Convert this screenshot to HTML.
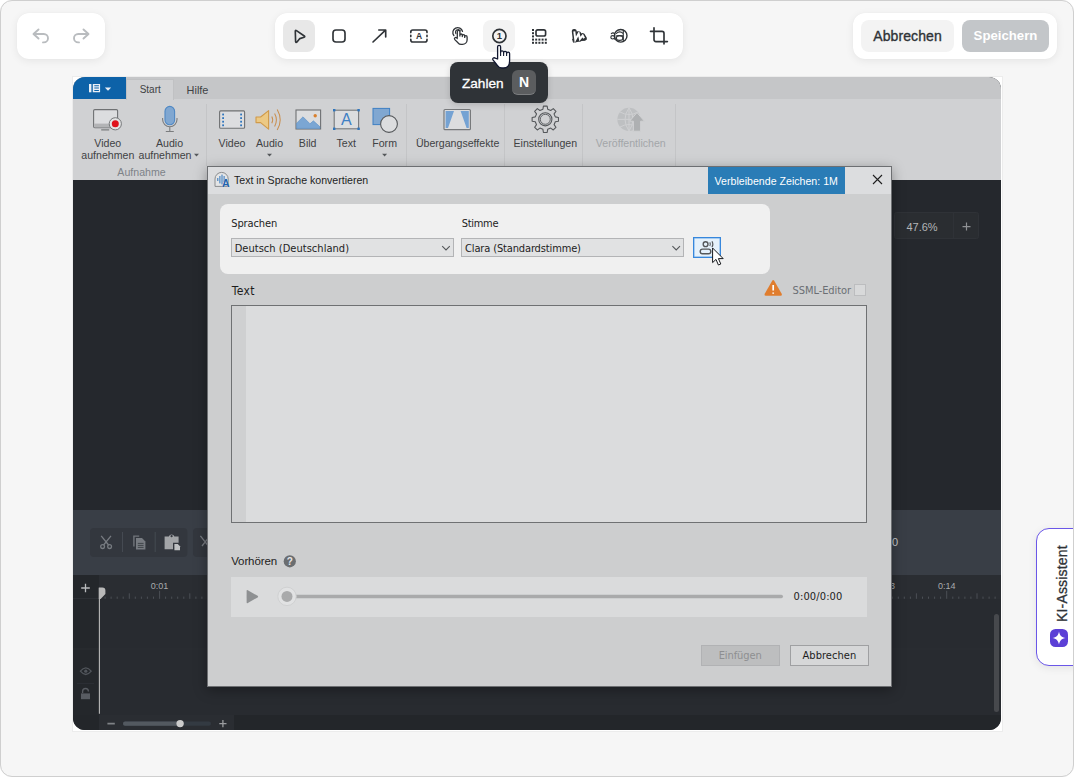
<!DOCTYPE html>
<html lang="de">
<head>
<meta charset="utf-8">
<title>Screenshot-Editor</title>
<style>
*{box-sizing:border-box;margin:0;padding:0}
html,body{width:1074px;height:777px;overflow:hidden;background:#fff;font-family:"Liberation Sans",sans-serif;}
.abs{position:absolute}
#page{position:absolute;left:0;top:0;width:1074px;height:777px;background:#f6f6f6;border-radius:12px;overflow:hidden}
#edge{position:absolute;left:0;top:0;width:1074px;height:777px;border:1px solid #cfcfcf;border-radius:12px;pointer-events:none}
.ic{position:absolute;overflow:visible;fill:none;stroke:#2f3337;stroke-width:1.65;stroke-linecap:round;stroke-linejoin:round}
.card{position:absolute;background:#fff;border-radius:12px;box-shadow:0 2px 8px rgba(0,0,0,.07),0 0 1px rgba(0,0,0,.05)}
.tbtn{position:absolute;top:7px;width:32px;height:32px;border-radius:8px}
.tbtn svg{position:absolute;left:6px;top:6px;width:20px;height:20px;fill:none;stroke:#222;stroke-width:1.6;stroke-linecap:round;stroke-linejoin:round}
/* app screenshot */
#frame{position:absolute;left:72px;top:76px;width:931px;height:656px;background:#fff;border:1px solid #ececec}
#shot{position:absolute;left:0;top:0;width:928px;height:653px;border-radius:12px;overflow:hidden;background:#25282d;font-family:"Liberation Sans",sans-serif}
.rl{position:absolute;font-size:10.6px;line-height:12px;color:#404244;text-align:center;white-space:nowrap;transform:translateX(-50%)}
.sep{position:absolute;width:1px;height:62px;background:#c4c5c7}
.dl{position:absolute;font-family:"DejaVu Sans Condensed","Liberation Sans",sans-serif;font-size:11px;line-height:12px;color:#1d1d1d;white-space:nowrap}
</style>
</head>
<body>
<div id="page">

<!-- undo / redo -->
<div class="card" style="left:17px;top:13px;width:88px;height:46px" id="undo">
<svg class="ic" style="left:0;top:0;stroke:#b9bcbf;stroke-width:1.9" width="88" height="46" viewBox="17 13 88 46">
<path d="M38.5 29.5 L33.5 34 L38.5 38.5"/><path d="M34 34 H43.8 a4.2 4.2 0 0 1 0 8.4 H43"/>
<path d="M83.5 29.5 L88.5 34 L83.5 38.5"/><path d="M88 34 H78.2 a4.2 4.2 0 0 0 0 8.4 H79"/>
</svg>
</div>

<!-- tools -->
<div class="card" style="left:275px;top:13px;width:408px;height:46px" id="tools">
<div class="abs" style="left:8px;top:7px;width:32px;height:32px;border-radius:8px;background:#e8e8e8"></div>
<div class="abs" style="left:208px;top:7px;width:32px;height:32px;border-radius:8px;background:#f3f3f3"></div>
<svg class="ic" style="left:0;top:0" width="408" height="46" viewBox="275 13 408 46">
<!-- pointer -->
<path d="M295.3 31.2 Q295.3 29.9 296.5 30.6 L304.3 36 Q305.3 36.8 304.1 37.2 L299.8 38.6 L297 42 Q295.9 43 295.6 41.6 Z"/>
<!-- square -->
<rect x="333" y="30" width="12" height="12" rx="3"/>
<!-- arrow -->
<path d="M373 42 L385.5 30.2 M378.8 30 H385.7 V37"/>
<!-- text box -->
<path d="M410.8 32.6 V32 a2 2 0 0 1 2-2 H425 a2 2 0 0 1 2 2 V32.6 M410.8 39.4 V40 a2 2 0 0 0 2 2 H425 a2 2 0 0 0 2-2 V39.4 M410.8 35.4 V36.6 M427 35.4 V36.6"/>
<!-- number circle -->
<circle cx="499.4" cy="36" r="6.6"/>
<!-- blur -->
<rect x="536" y="29.8" width="9.6" height="6.2" rx="1.8"/>
<!-- crop -->
<path d="M654 27.8 V39.6 a2 2 0 0 0 2 2 H667.4 M650.5 31.4 H662 a2 2 0 0 1 2 2 V44"/>
<!-- highlighter -->
<path d="M573 39 L585.6 36.6 L586.2 39.6 L573.8 42.2 Z" fill="#2f3337" stroke-width="1"/>
<path d="M574.3 31.4 L575.3 39.8 L578.7 33.6 L579.9 39 L582.7 35.6 L584.1 38.2" stroke-width="5"/>
<path d="M574.3 31.4 L575.3 39.8 L578.7 33.6 L579.9 39 L582.7 35.6 L584.1 38.2" stroke="#fff" stroke-width="2" stroke-linejoin="miter" stroke-linecap="butt"/>
<!-- zoom aa -->
<circle cx="620.7" cy="35.8" r="6.3" stroke-width="1.4"/>
<g stroke-width="1.1"><path d="M623.3 30.2 V41.4 M616.4 33.4 q3.4 -3 6.8 .2 M616.6 35.8 H623"/><ellipse cx="619.6" cy="38" rx="3.3" ry="2.4"/>
<path d="M614.7 33.8 V39.2 M611.3 33.6 q1.8 -1.6 3.4 .2"/><ellipse cx="612.7" cy="37.3" rx="1.9" ry="1.7"/></g>
<!-- hand click -->
<path d="M457.3 37.5 V31.6 a1.3 1.3 0 0 1 2.6 0 V36 M459.9 35.2 a1.2 1.2 0 0 1 2.4 0 V36.6 M462.3 35.9 a1.2 1.2 0 0 1 2.4 0 V37.4 M464.7 36.9 a1.2 1.2 0 0 1 2.4 0 V40 a4.6 4.6 0 0 1 -4.6 4.4 H461.2 a4 4 0 0 1 -3.2 -1.6 L454.8 39.6 a1.3 1.3 0 0 1 2 -1.7 L457.3 38.6" stroke-width="1.3"/>
<path d="M453.9 35.6 a4.9 4.9 0 1 1 8.6 -4.2" stroke-width="1.3"/>
<path d="M455.9 33.6 a2.6 2.6 0 0 1 4.4 -2.8" stroke-width="1.1"/>
<g fill="#2f3337" stroke="none">
<rect x="532" y="29" width="2" height="2"/><rect x="532" y="32.2" width="2" height="2"/><rect x="532" y="35.4" width="2" height="2"/>
<rect x="532" y="38.6" width="2" height="2"/><rect x="535.2" y="38.6" width="2" height="2"/><rect x="538.4" y="38.6" width="2" height="2"/><rect x="541.6" y="38.6" width="2" height="2"/><rect x="544.8" y="38.6" width="2" height="2"/>
<rect x="532" y="41.8" width="2" height="2"/><rect x="535.2" y="41.8" width="2" height="2"/><rect x="538.4" y="41.8" width="2" height="2"/><rect x="541.6" y="41.8" width="2" height="2"/><rect x="544.8" y="41.8" width="2" height="2"/>
</g>
<g fill="#2f3337" stroke="none" font-family="Liberation Sans, sans-serif" font-weight="bold">
<text x="419" y="39.2" font-size="8.5" text-anchor="middle">A</text>
<text x="499.5" y="39.4" font-size="9.5" text-anchor="middle">1</text>
</g>
</svg>
</div>

<!-- actions -->
<div class="card" style="left:853px;top:13px;width:204px;height:46px" id="actions">
<div class="abs" style="left:8px;top:7px;width:93px;height:32px;border-radius:8px;background:#f3f3f3;color:#2f3337;font-size:14px;line-height:32px;text-align:center;letter-spacing:.1px;-webkit-text-stroke:.35px #2f3337">Abbrechen</div>
<div class="abs" style="left:109px;top:7px;width:87px;height:32px;border-radius:8px;background:#c3c6c9;color:#fff;font-size:13.2px;font-weight:bold;line-height:32px;text-align:center">Speichern</div>
</div>

<!-- framed app screenshot -->
<div id="frame"><div id="shot">
<div id="pc" style="position:absolute;left:-73px;top:-77px;width:1074px;height:777px">
<!-- ribbon -->
<div class="abs" style="left:73px;top:77px;width:928px;height:22px;background:#c5c6c8"></div>
<div class="abs" style="left:73px;top:99px;width:928px;height:81px;background:#d0d1d3"></div>
<div class="abs" style="left:73px;top:77px;width:53px;height:22px;background:#0d62a8"></div>
<div class="abs" style="left:126px;top:79px;width:48px;height:21px;background:#d0d1d3;border:1px solid #c0c1c3;border-bottom:0"></div>
<div class="rl" style="left:150.2px;top:84px;font-size:10px">Start</div>
<div class="rl" style="left:197.5px;top:84px;font-size:10.9px">Hilfe</div>
<div class="rl" style="left:107.8px;top:137px">Video<br>aufnehmen</div>
<div class="rl" style="left:169.5px;top:137px">Audio</div>
<div class="rl" style="left:165px;top:149px">aufnehmen</div>
<div class="rl" style="left:141.5px;top:166px;color:#7d8288">Aufnahme</div>
<div class="rl" style="left:232px;top:137px">Video</div>
<div class="rl" style="left:269.5px;top:137px">Audio</div>
<div class="rl" style="left:307.7px;top:137px">Bild</div>
<div class="rl" style="left:346.2px;top:137px">Text</div>
<div class="rl" style="left:384.6px;top:137px">Form</div>
<div class="rl" style="left:457.6px;top:137px">Übergangseffekte</div>
<div class="rl" style="left:545.3px;top:137px">Einstellungen</div>
<div class="rl" style="left:630.8px;top:137px;color:#a3a6a9">Veröffentlichen</div>
<div class="sep" style="left:206px;top:104px"></div>
<div class="sep" style="left:406px;top:104px"></div>
<div class="sep" style="left:504px;top:104px"></div>
<div class="sep" style="left:582px;top:104px"></div>
<div class="sep" style="left:675px;top:104px"></div>
<svg class="abs" id="ribsvg" style="left:73px;top:77px" width="928" height="110" viewBox="73 77 928 110">
<!-- menu tab icon -->
<g fill="#e9eef5"><rect x="89" y="84" width="2.4" height="8.3"/><path d="M92.8 84 h7.3 v8.3 h-7.3 z M94.3 85.3 v1 h4.6 v-1 z M94.3 87.6 v1 h4.6 v-1 z M94.3 89.9 v1 h4.6 v-1 z" fill-rule="evenodd"/><path d="M104.8 87.4 h6.4 l-3.2 3.3 z"/></g>
<!-- video record -->
<rect x="93.6" y="109.6" width="24" height="18.2" rx="1.2" fill="#dcdddf" stroke="#6f7173" stroke-width="1.1"/>
<rect x="94.2" y="123.6" width="22.8" height="3.7" fill="#b3b4b6"/>
<path d="M101.2 129.8 h8" stroke="#7a7c7e" stroke-width="1.2"/>
<circle cx="115.3" cy="123.8" r="6.1" fill="#e3e4e5" stroke="#77797b" stroke-width="1"/>
<circle cx="115.3" cy="123.8" r="3.5" fill="#e0131d"/>
<!-- mic -->
<rect x="165" y="106.4" width="9.6" height="18.4" rx="4.8" fill="#80a7d1" stroke="#4f88c4" stroke-width="1.1"/>
<path d="M162.6 118 v1.6 a7.2 7.2 0 0 0 14.4 0 v-1.6 M169.8 126.8 v4.6 M165.8 131.5 h8" fill="none" stroke="#7a7c7e" stroke-width="1.1"/>
<path d="M194 153.8 h5 l-2.5 2.6 z" fill="#55585b"/>
<!-- video -->
<rect x="219.6" y="110.9" width="25" height="17.4" rx="1" fill="#dcdddf" stroke="#6f7173" stroke-width="1.1"/>
<g fill="#2f75bd"><rect x="222.2" y="113.6" width="1.8" height="1.8"/><rect x="222.2" y="117.2" width="1.8" height="1.8"/><rect x="222.2" y="120.8" width="1.8" height="1.8"/><rect x="222.2" y="124.4" width="1.8" height="1.8"/>
<rect x="240.2" y="113.6" width="1.8" height="1.8"/><rect x="240.2" y="117.2" width="1.8" height="1.8"/><rect x="240.2" y="120.8" width="1.8" height="1.8"/><rect x="240.2" y="124.4" width="1.8" height="1.8"/></g>
<!-- audio -->
<path d="M256 117 h4.6 l8 -6.4 v18.6 l-8 -6.6 h-4.6 z" fill="#ecc984" stroke="#d09a4a" stroke-width="1.1" stroke-linejoin="round"/>
<path d="M271.8 116.6 q1.8 3.2 0 6.6 M274.6 113.4 q3.6 6.4 0 13 M277.2 109.4 q6 10.4 0 20.6" fill="none" stroke="#c98f4f" stroke-width="1.05"/>
<path d="M267 153.8 h5 l-2.5 2.6 z" fill="#55585b"/>
<!-- bild -->
<rect x="296" y="110" width="24.6" height="19" fill="#dcdddf" stroke="#6f7173" stroke-width="1.1"/>
<path d="M296.6 128.4 v-5.2 l6.4 -6.4 l7 7 l3.4 -3 l6.6 6 v1.6 z" fill="#7ba6d3" stroke="#4f88c4" stroke-width=".5"/>
<circle cx="315.2" cy="115.8" r="1.7" fill="#d9802e"/>
<!-- text -->
<rect x="334.2" y="110.2" width="24.4" height="18.6" fill="#dcdddf" stroke="#77797b" stroke-width="1.1"/>
<g fill="#2f75bd"><rect x="333" y="109" width="2.4" height="2.4"/><rect x="357.4" y="109" width="2.4" height="2.4"/><rect x="333" y="127.6" width="2.4" height="2.4"/><rect x="357.4" y="127.6" width="2.4" height="2.4"/></g>
<text x="346.4" y="125.3" font-family="Liberation Sans, sans-serif" font-size="16" fill="#3f80c4" text-anchor="middle">A</text>
<!-- form -->
<rect x="373" y="108.4" width="16.6" height="16.2" fill="#80a7d1" stroke="#3f80c4" stroke-width="1"/>
<circle cx="389" cy="124" r="8.4" fill="#dcdddf" stroke="#55585b" stroke-width="1.1"/>
<path d="M382.1 153.8 h5 l-2.5 2.6 z" fill="#55585b"/>
<!-- transitions -->
<rect x="444" y="109.5" width="26.4" height="20.2" rx="1" fill="#dcdddf" stroke="#77797b" stroke-width="1.2"/>
<path d="M445.6 111 h8.4 l-6 17 h-2.4 z M460.6 111 h8.2 v17 h-2.2 z" fill="#74a2d3"/>
<!-- gear -->
<g transform="translate(545.3 119.3)" fill="none" stroke="#55585b" stroke-width="1.1" stroke-linejoin="round">
<path d="M-2.40 -10.02 L-1.87 -13.17 L1.87 -13.17 L2.40 -10.02 L5.38 -8.78 L7.99 -10.64 L10.64 -7.99 L8.78 -5.38 L10.02 -2.40 L13.17 -1.87 L13.17 1.87 L10.02 2.40 L8.78 5.38 L10.64 7.99 L7.99 10.64 L5.38 8.78 L2.40 10.02 L1.87 13.17 L-1.87 13.17 L-2.40 10.02 L-5.38 8.78 L-7.99 10.64 L-10.64 7.99 L-8.78 5.38 L-10.02 2.40 L-13.17 1.87 L-13.17 -1.87 L-10.02 -2.40 L-8.78 -5.38 L-10.64 -7.99 L-7.99 -10.64 L-5.38 -8.78 Z"/>
<circle r="6.6"/><circle r="5" stroke-width=".9"/>
</g>
<!-- publish -->
<g opacity=".75"><circle cx="629" cy="119.4" r="11.6" fill="#b9bbbd"/>
<path d="M617.4 119.4 h23 M629 107.8 v23 M620 112 q9 5 18 0 M620 127 q9 -5 18 0 M629 107.8 q-8 11.6 0 23.2 M629 107.8 q8 11.6 0 23.2" fill="none" stroke="#cfd0d2" stroke-width="1"/>
<path d="M637 112.6 l7.4 8.6 h-3.8 v10 h-7.2 v-10 h-3.8 z" fill="#a3a5a7" stroke="#d0d1d3" stroke-width="1"/></g>
</svg>

<!-- dark editor -->
<div class="abs" style="left:73px;top:510px;width:928px;height:65px;background:#393e46"></div>
<div class="abs" style="left:73px;top:575px;width:928px;height:140px;background:#282b30"></div>
<div class="abs" style="left:73px;top:575px;width:26px;height:140px;background:#24272b"></div>
<div class="abs" style="left:73px;top:715px;width:928px;height:15px;background:#23262a"></div>
<div class="abs" style="left:99px;top:715px;width:135px;height:15px;background:#2a2d32"></div>
<svg class="abs" id="darksvg" style="left:73px;top:180px" width="928" height="550" viewBox="73 180 928 550">
<!-- zoom control -->
<rect x="894.5" y="212.5" width="84" height="26" rx="2" fill="#2a2d31" stroke="#2f3237"/>
<path d="M953.5 213 V238" stroke="#2f3237"/>
<text x="922" y="231" font-family="Liberation Sans, sans-serif" font-size="11" fill="#b4b6b8" text-anchor="middle">47.6%</text>
<path d="M962.5 226.6 h8 M966.5 222.6 v8" stroke="#8f9194" stroke-width="1.2"/>
<!-- toolbar groups -->
<rect x="90" y="528" width="97.4" height="29" rx="4" fill="#33373e"/>
<rect x="193" y="528" width="97.4" height="29" rx="4" fill="#33373e"/>
<path d="M122.5 532 V552 M155.2 532 V552" stroke="#454a52" stroke-width="1"/>
<!-- scissors -->
<g fill="none" stroke="#777b81" stroke-width="1.3"><circle cx="102.6" cy="546.6" r="1.9"/><circle cx="109.6" cy="546.6" r="1.9"/><path d="M101.2 535.8 L108.6 545 M111 535.8 L103.6 545"/></g>
<!-- copy -->
<path d="M133.2 535.4 h6 v1.4 h-4.6 v9.6 h-1.4 z" fill="#71757b"/>
<path d="M136 538 h6 l3.4 3.4 v8 h-9.4 z" fill="#777b81"/>
<path d="M137.8 543.4 h5.8 M137.8 545.4 h5.8 M137.8 547.4 h5.8" stroke="#33373e" stroke-width=".8"/>
<!-- paste -->
<path d="M164.6 536.4 h4.2 a3 3 0 0 1 5.6 0 h4.2 v6.4 h-5.6 v6.4 h-8.4 z" fill="#a3a5a8"/>
<circle cx="171.6" cy="536.2" r="1.1" fill="#33373e"/>
<path d="M174.4 544 h3.4 l2.2 2.2 v4 h-5.6 z" fill="#bfc1c3"/>
<path d="M200.4 535.8 L210 548 M210 535.8 L202 546" stroke="#777b81" stroke-width="1.3" fill="none"/>
<text x="892" y="546.2" font-family="Liberation Sans, sans-serif" font-size="11" fill="#c9cbcd">0</text>
<!-- timeline -->
<rect x="99" y="575" width="902" height="24" fill="#2a2d32"/>
<path d="M73 598.5 H99" stroke="#2d3035" stroke-width="1"/>
<path d="M73 649 H1001" stroke="#2b2e33" stroke-width="1"/>
<path d="M81.2 588 h8.6 M85.5 583.7 v8.6" stroke="#b9bbbd" stroke-width="1.3"/>
<path d="M105.1 596.6 V598.8 M111.1 596.6 V598.8 M117.2 596.6 V598.8 M123.2 596.6 V598.8 M129.3 593.3 V598.8 M135.3 596.6 V598.8 M141.4 596.6 V598.8 M147.4 596.6 V598.8 M153.5 596.6 V598.8 M159.6 590.8 V598.8 M165.6 596.6 V598.8 M171.7 596.6 V598.8 M177.7 596.6 V598.8 M183.8 596.6 V598.8 M189.8 593.3 V598.8 M195.9 596.6 V598.8 M201.9 596.6 V598.8 M208.0 596.6 V598.8 M214.0 596.6 V598.8 M220.1 590.8 V598.8 M226.2 596.6 V598.8 M232.2 596.6 V598.8 M238.3 596.6 V598.8 M244.3 596.6 V598.8 M250.4 593.3 V598.8 M256.4 596.6 V598.8 M262.5 596.6 V598.8 M268.5 596.6 V598.8 M274.6 596.6 V598.8 M280.6 590.8 V598.8 M286.7 596.6 V598.8 M292.8 596.6 V598.8 M298.8 596.6 V598.8 M304.9 596.6 V598.8 M310.9 593.3 V598.8 M317.0 596.6 V598.8 M323.0 596.6 V598.8 M329.1 596.6 V598.8 M335.1 596.6 V598.8 M341.2 590.8 V598.8 M347.3 596.6 V598.8 M353.3 596.6 V598.8 M359.4 596.6 V598.8 M365.4 596.6 V598.8 M371.5 593.3 V598.8 M377.5 596.6 V598.8 M383.6 596.6 V598.8 M389.6 596.6 V598.8 M395.7 596.6 V598.8 M401.8 590.8 V598.8 M407.8 596.6 V598.8 M413.9 596.6 V598.8 M419.9 596.6 V598.8 M426.0 596.6 V598.8 M432.0 593.3 V598.8 M438.1 596.6 V598.8 M444.1 596.6 V598.8 M450.2 596.6 V598.8 M456.2 596.6 V598.8 M462.3 590.8 V598.8 M468.4 596.6 V598.8 M474.4 596.6 V598.8 M480.5 596.6 V598.8 M486.5 596.6 V598.8 M492.6 593.3 V598.8 M498.6 596.6 V598.8 M504.7 596.6 V598.8 M510.7 596.6 V598.8 M516.8 596.6 V598.8 M522.8 590.8 V598.8 M528.9 596.6 V598.8 M535.0 596.6 V598.8 M541.0 596.6 V598.8 M547.1 596.6 V598.8 M553.1 593.3 V598.8 M559.2 596.6 V598.8 M565.2 596.6 V598.8 M571.3 596.6 V598.8 M577.3 596.6 V598.8 M583.4 590.8 V598.8 M589.5 596.6 V598.8 M595.5 596.6 V598.8 M601.6 596.6 V598.8 M607.6 596.6 V598.8 M613.7 593.3 V598.8 M619.7 596.6 V598.8 M625.8 596.6 V598.8 M631.8 596.6 V598.8 M637.9 596.6 V598.8 M643.9 590.8 V598.8 M650.0 596.6 V598.8 M656.1 596.6 V598.8 M662.1 596.6 V598.8 M668.2 596.6 V598.8 M674.2 593.3 V598.8 M680.3 596.6 V598.8 M686.3 596.6 V598.8 M692.4 596.6 V598.8 M698.4 596.6 V598.8 M704.5 590.8 V598.8 M710.6 596.6 V598.8 M716.6 596.6 V598.8 M722.7 596.6 V598.8 M728.7 596.6 V598.8 M734.8 593.3 V598.8 M740.8 596.6 V598.8 M746.9 596.6 V598.8 M752.9 596.6 V598.8 M759.0 596.6 V598.8 M765.0 590.8 V598.8 M771.1 596.6 V598.8 M777.2 596.6 V598.8 M783.2 596.6 V598.8 M789.3 596.6 V598.8 M795.3 593.3 V598.8 M801.4 596.6 V598.8 M807.4 596.6 V598.8 M813.5 596.6 V598.8 M819.5 596.6 V598.8 M825.6 590.8 V598.8 M831.7 596.6 V598.8 M837.7 596.6 V598.8 M843.8 596.6 V598.8 M849.8 596.6 V598.8 M855.9 593.3 V598.8 M861.9 596.6 V598.8 M868.0 596.6 V598.8 M874.0 596.6 V598.8 M880.1 596.6 V598.8 M886.1 590.8 V598.8 M892.2 596.6 V598.8 M898.3 596.6 V598.8 M904.3 596.6 V598.8 M910.4 596.6 V598.8 M916.4 593.3 V598.8 M922.5 596.6 V598.8 M928.5 596.6 V598.8 M934.6 596.6 V598.8 M940.6 596.6 V598.8 M946.7 590.8 V598.8 M952.8 596.6 V598.8 M958.8 596.6 V598.8 M964.9 596.6 V598.8 M970.9 596.6 V598.8 M977.0 593.3 V598.8 M983.0 596.6 V598.8 M989.1 596.6 V598.8 M995.1 596.6 V598.8" stroke="#4b4f55" stroke-width="1"/>
<g font-family="Liberation Sans, sans-serif" font-size="9" fill="#a9abad" text-anchor="middle">
<text x="159.6" y="588.8">0:01</text><text x="886.2" y="588.8">0:13</text><text x="946.7" y="588.8">0:14</text>
</g>
<path d="M98.8 587.6 h3.6 a3 3 0 0 1 3 3 v3.4 l-4.8 5 h-1.8 z" fill="#b9b9b9"/>
<path d="M99.4 588 V713.8" stroke="#b9b9b9" stroke-width="1.1"/>
<!-- eye / lock -->
<path d="M80.4 671.2 q5.4 -6.6 10.8 0 q-5.4 6.6 -10.8 0 z" fill="none" stroke="#51555b" stroke-width="1.3"/><circle cx="85.8" cy="671.2" r="1.6" fill="#51555b"/>
<path d="M77 683.6 H94" stroke="#2d3035"/>
<rect x="81" y="693.4" width="9" height="5.8" fill="#585c62"/><path d="M82.6 693 v-1.6 a2.9 2.9 0 0 1 5.8 0" fill="none" stroke="#585c62" stroke-width="1.3"/>
<!-- scrollbar -->
<rect x="994" y="614" width="5" height="98" rx="2.5" fill="#47494d"/>
<!-- zoom slider -->
<path d="M107.4 723.7 h7.4" stroke="#7f8286" stroke-width="1.8"/>
<rect x="123" y="721.6" width="88" height="4.2" rx="2.1" fill="#333a42"/>
<rect x="123" y="721.6" width="57" height="4.2" rx="2.1" fill="#535960"/>
<circle cx="180.1" cy="723.6" r="3.7" fill="#cbcbcb"/>
<path d="M219.3 723.6 h7.2 M222.9 720 v7.2" stroke="#9a9c9f" stroke-width="1.3"/>
</svg>

<!-- dialog -->
<div class="abs" id="dlg" style="left:207px;top:166px;width:685px;height:521px;background:#cdcecf;border:1px solid #6d6f72;box-shadow:0 3px 12px rgba(0,0,0,.35)"></div>
<div class="abs" style="left:208px;top:167px;width:683px;height:27px;background:#dcdddf"></div>
<div class="abs" style="left:708px;top:167px;width:137px;height:27px;background:#2a7cb6"></div>
<div class="abs" style="left:220px;top:204px;width:550px;height:70px;border-radius:8px;background:#f0f0f0"></div>
<div class="abs" style="left:231px;top:237.5px;width:223px;height:19.6px;background:#e1e2e3;border:1px solid #b3b4b6"></div>
<div class="abs" style="left:461.4px;top:237.5px;width:222.6px;height:19.6px;background:#e1e2e3;border:1px solid #b3b4b6"></div>
<div class="abs" style="left:693px;top:237.4px;width:28px;height:20.2px;background:#e5f1fb;border:1px solid #3787dc;box-shadow:inset 0 0 0 .5px #6aa8e8"></div>
<div class="abs" style="left:231px;top:305px;width:636px;height:218px;background:#dbdcdd;border:1px solid #6f7173"></div>
<div class="abs" style="left:232px;top:306px;width:14px;height:216px;background:#cfd0d1"></div>
<div class="abs" style="left:854px;top:284px;width:12px;height:12px;background:#d8d9da;border:1px solid #bcbdbf"></div>
<div class="abs" style="left:231px;top:577px;width:636px;height:40px;background:#dadbdc"></div>
<div class="abs" style="left:701px;top:645px;width:79px;height:21px;background:#bdbebf;border:1px solid #b1b2b4"></div>
<div class="abs" style="left:790px;top:645px;width:79px;height:21px;background:#d6d7d8;border:1px solid #9fa0a2"></div>
<div class="dl" style="left:234px;top:174px;font-family:'Liberation Sans',sans-serif;font-size:10.6px">Text in Sprache konvertieren</div>
<div class="dl" style="left:714.6px;top:174.6px;font-family:'Liberation Sans',sans-serif;font-size:10.6px;letter-spacing:.01px;color:#fff">Verbleibende Zeichen: 1M</div>
<div class="dl" style="left:231.3px;top:217.7px;letter-spacing:-.13px">Sprachen</div>
<div class="dl" style="left:461.7px;top:217.7px;letter-spacing:-.3px">Stimme</div>
<div class="dl" style="left:234.7px;top:242.8px;letter-spacing:.03px">Deutsch (Deutschland)</div>
<div class="dl" style="left:465px;top:242.8px;letter-spacing:-.14px">Clara (Standardstimme)</div>
<div class="dl" style="left:231.8px;top:284.6px;font-size:12px;letter-spacing:.32px">Text</div>
<div class="dl" style="left:792.6px;top:284.6px;letter-spacing:-.08px;color:#6b6e74">SSML-Editor</div>
<div class="dl" style="left:231.2px;top:554.8px;font-family:'Liberation Sans',sans-serif;font-size:11.5px;letter-spacing:-.11px">Vorhören</div>
<div class="dl" style="left:793.5px;top:590.6px;letter-spacing:.13px">0:00/0:00</div>
<div class="dl" style="left:718.7px;top:650px;letter-spacing:-.09px;color:#8e8f91">Einfügen</div>
<div class="dl" style="left:802.5px;top:650px;letter-spacing:.04px">Abbrechen</div>
<svg class="abs" id="dlgsvg" style="left:207px;top:166px" width="684" height="521" viewBox="207 166 684 521">
<!-- title icon -->
<path d="M215 186.4 V179 a6.6 6.6 0 0 1 13.2 0 V186.4 z" fill="#e4e5e6" stroke="#8a8c8e" stroke-width="1"/>
<path d="M217.8 178 v3 M219.9 176 v7.4 M222 174.6 v9.8 M224.1 176 v6" stroke="#2f75bd" stroke-width="1"/>
<text x="225.8" y="187.2" font-family="Liberation Sans, sans-serif" font-weight="bold" font-size="10.5" fill="#1f63b0" stroke="#dcdddf" stroke-width=".5" paint-order="stroke" text-anchor="middle">A</text>
<!-- close -->
<path d="M873 175 l9 9 M882 175 l-9 9" stroke="#1f1f1f" stroke-width="1.1"/>
<!-- chevrons -->
<path d="M442.2 246.2 l3.8 3.8 l3.8 -3.8 M672.4 246.2 l3.8 3.8 l3.8 -3.8" fill="none" stroke="#55585b" stroke-width="1.1"/>
<!-- voice -->
<g fill="none" stroke="#55585b" stroke-width="1.4"><circle cx="705.6" cy="244.2" r="2.4"/><rect x="700.2" y="249.1" width="10.6" height="4.6" rx="2.3"/><path d="M709.8 242.4 q1.1 1.8 0 3.6 M712 241.2 q1.8 3 0 6" stroke-width="1.1"/></g>
<!-- cursor -->
<path d="M712.6 248 v14.6 l3.4 -3.2 l2.4 5.6 l2.4 -1 l-2.4 -5.4 h4.8 z" fill="#fff" stroke="#16181c" stroke-width="1" stroke-linejoin="round"/>
<!-- warning -->
<path d="M772.2 280.8 q1 -1.4 2 0 l7.6 13.2 q.6 1.6 -1 1.8 h-15.2 q-1.6 -.2 -1 -1.8 z" fill="#e07d2e"/>
<path d="M773.2 285 v5.6 M773.2 292.4 v1.4" stroke="#fff" stroke-width="1.7"/>
<!-- help -->
<circle cx="289.8" cy="561.3" r="6.1" fill="#6a6d70"/>
<text x="289.8" y="564.9" font-family="Liberation Sans, sans-serif" font-weight="bold" font-size="10" fill="#e6e7e8" text-anchor="middle">?</text>
<!-- player -->
<path d="M246.6 591 q0 -1.4 1.2 -.8 l9.8 5.6 q1 .8 0 1.6 l-9.8 5.6 q-1.2 .6 -1.2 -.8 z" fill="#8e9092"/>
<rect x="292" y="594.8" width="491" height="3.4" rx="1.7" fill="#a9aaab"/>
<circle cx="287" cy="596.4" r="9.2" fill="#e1e2e3" stroke="#d0d1d2" stroke-width="1"/>
<circle cx="287" cy="596.4" r="5.5" fill="#a9aaab"/>
</svg>
</div>
</div></div>

<!-- tooltip -->
<div class="abs" style="left:450px;top:62px;width:98px;height:41px;border-radius:8px;background:#2f3337;box-shadow:0 2px 6px rgba(0,0,0,.15)">
<div class="abs" style="left:12px;top:0;line-height:44px;font-size:13.6px;color:#fff;-webkit-text-stroke:.3px #fff">Zahlen</div>
<div class="abs" style="left:62px;top:8px;width:24px;height:25px;border-radius:6px;background:#5b5d5f;border-bottom:1px solid #7b7d7f;color:#fff;font-size:14px;font-weight:bold;line-height:25px;text-align:center">N</div>
</div>
<!-- hand cursor -->
<svg class="abs" style="left:488px;top:42px;overflow:visible" width="26" height="30" viewBox="488 42 26 30">
<path d="M497.6 59 V46.8 a1.5 1.5 0 0 1 3 0 V52.5 a1.5 1.5 0 0 1 3 -0.3 V53 a1.5 1.5 0 0 1 3 -0.2 V53.6 a1.5 1.5 0 0 1 3 0 V61 c0 4 -2.2 7 -6 7 h-1.6 c-2.4 0 -3.8 -1.2 -5 -3 L493 59.8 c-0.9 -1.4 1 -2.8 2.2 -1.6 Z" fill="#fff" stroke="#10162f" stroke-width="1.3" stroke-linejoin="round"/>
<path d="M500.6 52.5 V56 M503.6 53 V56 M506.6 53.4 V56" stroke="#10162f" stroke-width="1.1" fill="none"/>
</svg>
<!-- KI assistant -->
<div class="abs" style="left:1036px;top:528px;width:50px;height:138px;background:#fff;border:1px solid #6b57e8;border-radius:13px;box-shadow:0 2px 8px rgba(0,0,0,.08)"></div>
<div class="abs" style="left:1054.3px;top:621.8px;width:0;height:0"><div style="position:absolute;left:0;top:0;transform:rotate(-90deg);transform-origin:0 0;white-space:nowrap;font-size:14px;line-height:16px;color:#2f3337;letter-spacing:.17px;-webkit-text-stroke:.3px #2f3337">KI-Assistent</div></div>
<svg class="abs" style="left:1050px;top:629px" width="18" height="18" viewBox="0 0 18 18"><rect x="0" y="0" width="18" height="18" rx="5.5" fill="#5b3fd6"/><path d="M9 2.4 C9.7 6.4 11.6 8.3 15.6 9 C11.6 9.7 9.7 11.6 9 15.6 C8.3 11.6 6.4 9.7 2.4 9 C6.4 8.3 8.3 6.4 9 2.4 Z" fill="#fff"/></svg>
</div>
<div id="edge"></div>
</body>
</html>
